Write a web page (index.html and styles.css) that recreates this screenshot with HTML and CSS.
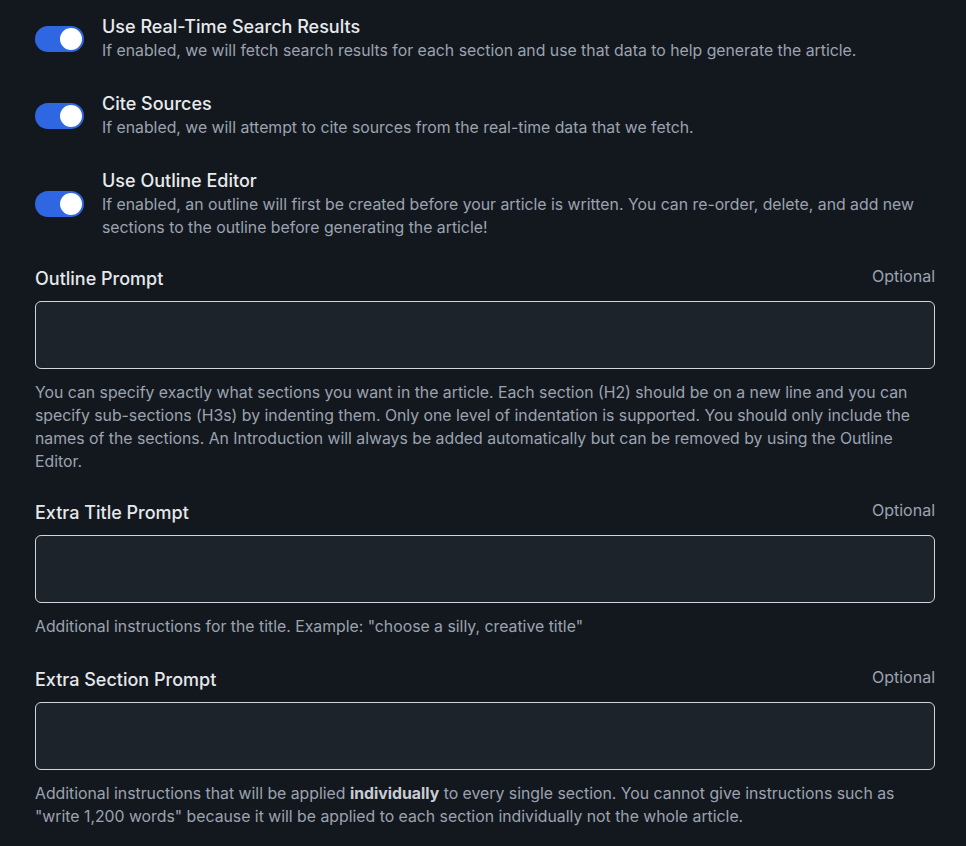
FILE: index.html
```html
<!DOCTYPE html>
<html>
<head>
<meta charset="utf-8">
<link rel="stylesheet" href="styles.css">
</head>
<body>
<div class="page">
  <div class="toggle-row">
    <div class="toggle"><span class="knob"></span></div>
    <div class="toggle-text">
      <div class="toggle-title">Use Real-Time Search Results</div>
      <div class="toggle-desc">If enabled, we will fetch search results for each section and use that data to help generate the article.</div>
    </div>
  </div>
  <div class="toggle-row">
    <div class="toggle"><span class="knob"></span></div>
    <div class="toggle-text">
      <div class="toggle-title">Cite Sources</div>
      <div class="toggle-desc">If enabled, we will attempt to cite sources from the real-time data that we fetch.</div>
    </div>
  </div>
  <div class="toggle-row">
    <div class="toggle"><span class="knob"></span></div>
    <div class="toggle-text">
      <div class="toggle-title">Use Outline Editor</div>
      <div class="toggle-desc">If enabled, an outline will first be created before your article is written. You can re-order, delete, and add new sections to the outline before generating the article!</div>
    </div>
  </div>

  <div class="field">
    <div class="field-head">
      <label class="field-label">Outline Prompt</label>
      <span class="field-opt">Optional</span>
    </div>
    <div class="field-input"></div>
    <p class="field-help">You can specify exactly what sections you want in the article. Each section (H2) should be on a new line and you can specify sub-sections (H3s) by indenting them. Only one level of indentation is supported. You should only include the names of the sections. An Introduction will always be added automatically but can be removed by using the Outline Editor.</p>
  </div>

  <div class="field field-title">
    <div class="field-head">
      <label class="field-label">Extra Title Prompt</label>
      <span class="field-opt">Optional</span>
    </div>
    <div class="field-input"></div>
    <p class="field-help">Additional instructions for the title. Example: "choose a silly, creative title"</p>
  </div>

  <div class="field">
    <div class="field-head">
      <label class="field-label">Extra Section Prompt</label>
      <span class="field-opt">Optional</span>
    </div>
    <div class="field-input"></div>
    <p class="field-help">Additional instructions that will be applied <span class="em">individually</span> to every single section. You cannot give instructions such as "write 1,200 words" because it will be applied to each section individually not the whole article.</p>
  </div>
</div>
</body>
</html>
```
FILE: styles.css
```css
html, body {
  margin: 0;
  padding: 0;
  background: #13181f;
}
body {
  font-family: Inter, "Noto Sans", sans-serif;
  color: #e5e7eb;
}
.page {
  width: 900px;
  padding: 15px 31px 0 35px;
  display: flex;
  flex-direction: column;
}
.toggle-row {
  display: flex;
  align-items: center;
  gap: 18px;
  margin-bottom: 30px;
}
.toggle {
  flex: none;
  width: 49px;
  height: 26px;
  border-radius: 13px;
  background: #2f67e2;
  display: flex;
  align-items: center;
  justify-content: flex-end;
  padding: 0 2px;
  box-sizing: border-box;
}
.knob {
  width: 22px;
  height: 22px;
  border-radius: 50%;
  background: #ffffff;
}
.toggle-title {
  font-size: 18px;
  font-weight: 500;
  line-height: 24px;
  color: #e8eaed;
}
.toggle-desc {
  font-size: 15.8px;
  line-height: 23px;
  color: #9ca3af;
}
.field {
  margin-bottom: 28px;
}
.field-title {
  margin-bottom: 30px;
}
.toggle-row + .field {
  margin-top: -2px;
}
.field-head {
  display: flex;
  justify-content: space-between;
  align-items: flex-start;
  margin-bottom: 10px;
}
.field-label {
  font-size: 18px;
  font-weight: 500;
  line-height: 24px;
  color: #e5e7eb;
}
.field-opt {
  font-size: 16px;
  line-height: 18px;
  color: #9ca3af;
}
.field-input {
  height: 66px;
  border: 1px solid #d1d5db;
  border-radius: 6px;
  background: #1d232b;
}
.field-help {
  margin: 12px 0 0;
  font-size: 15.8px;
  line-height: 23px;
  color: #9ca3af;
}
.field-help .em {
  font-weight: 700;
  color: #c9cdd3;
}
```
